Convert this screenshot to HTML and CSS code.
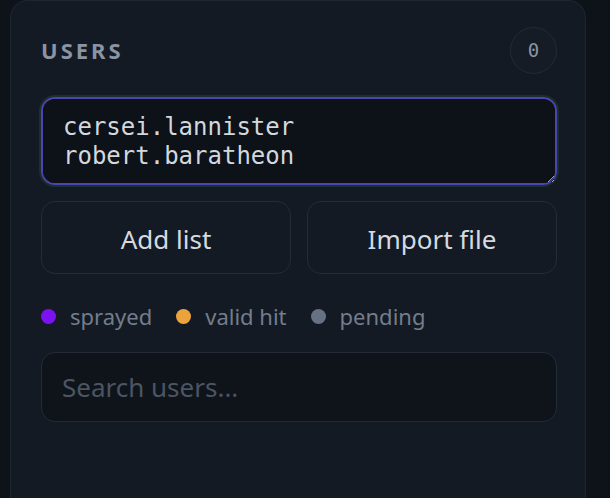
FILE: index.html
```html
<!DOCTYPE html>
<html lang="en">
<head>
    <meta charset="UTF-8">
    <meta name="viewport" content="width=device-width, initial-scale=1.0">
    <title>Users</title>
    <link rel="stylesheet" href="styles.css">
</head>
<body>
    <div class="panel">
        <div class="panel-header">
            <h2 class="panel-title">Users</h2>
            <span class="count-badge">0</span>
        </div>

        <textarea class="user-input" spellcheck="false">cersei.lannister
robert.baratheon</textarea>

        <div class="button-group">
            <button class="ghost-btn">Add list</button>
            <button class="ghost-btn">Import file</button>
        </div>

        <div class="legend">
            <span class="legend-item"><span class="dot dot-sprayed"></span>sprayed</span>
            <span class="legend-item"><span class="dot dot-valid"></span>valid hit</span>
            <span class="legend-item"><span class="dot dot-pending"></span>pending</span>
        </div>

        <input type="text" class="search-input" placeholder="Search users...">
    </div>
</body>
</html>
```

FILE: styles.css
```css
body {
    font-family: 'Noto Sans', 'Open Sans', sans-serif;
    margin: 0;
    padding: 0 24px 0 10px;
    background: #0e131a;
    min-height: 100vh;
    color-scheme: dark;
}
.panel {
    background: #141a23;
    border: 1px solid #1e2630;
    border-bottom: none;
    border-radius: 18px 18px 0 0;
    padding: 26px 28px 0 30px;
    min-height: 520px;
    box-sizing: border-box;
}
.panel-header {
    display: flex;
    align-items: center;
    justify-content: space-between;
    height: 46px;
}
.panel-title {
    margin: 0;
    font-size: 22px;
    font-weight: 700;
    letter-spacing: 3px;
    text-transform: uppercase;
    color: #8a94a3;
}
.count-badge {
    width: 47px;
    height: 47px;
    border-radius: 50%;
    border: 1px solid #222b36;
    background: #151c25;
    box-sizing: border-box;
    display: flex;
    align-items: center;
    justify-content: center;
    font-family: 'DejaVu Sans Mono', monospace;
    font-size: 19px;
    color: #8a94a3;
}
.user-input {
    display: block;
    width: 100%;
    height: 88px;
    margin-top: 24px;
    padding: 14px 20px;
    background: #0d1118;
    border: 2px solid #5141b3;
    border-radius: 14px;
    box-shadow: 0 0 0 2px #17322b;
    font-family: 'DejaVu Sans Mono', monospace;
    font-size: 24px;
    line-height: 29px;
    color: #d3d8df;
    resize: vertical;
    outline: none;
    box-sizing: border-box;
}
.button-group {
    display: grid;
    grid-template-columns: 1fr 1fr;
    gap: 16px;
    margin-top: 16px;
}
.ghost-btn {
    height: 73px;
    background: #141a23;
    border: 1px solid #232c37;
    border-radius: 14px;
    padding: 3px 0 0;
    font-family: inherit;
    font-size: 26px;
    color: #d5dae1;
    cursor: pointer;
}
.ghost-btn:hover {
    background: #18202a;
}
.legend {
    display: flex;
    align-items: center;
    gap: 24px;
    height: 30px;
    margin-top: 27px;
    font-size: 22px;
    color: #737d8c;
}
.legend-item {
    display: flex;
    align-items: center;
    gap: 14px;
}
.dot {
    width: 15px;
    height: 15px;
    border-radius: 50%;
}
.dot-sprayed {
    background: #7c12f2;
}
.dot-valid {
    background: #eca33e;
}
.dot-pending {
    background: #667283;
}
.search-input {
    display: block;
    width: 100%;
    height: 70px;
    margin-top: 21px;
    padding: 0 20px;
    background: #0f141b;
    border: 1px solid #222b36;
    border-radius: 14px;
    font-family: inherit;
    font-size: 26px;
    color: #d3d8df;
    outline: none;
    box-sizing: border-box;
}
.search-input::placeholder {
    color: #4c5563;
}
```
